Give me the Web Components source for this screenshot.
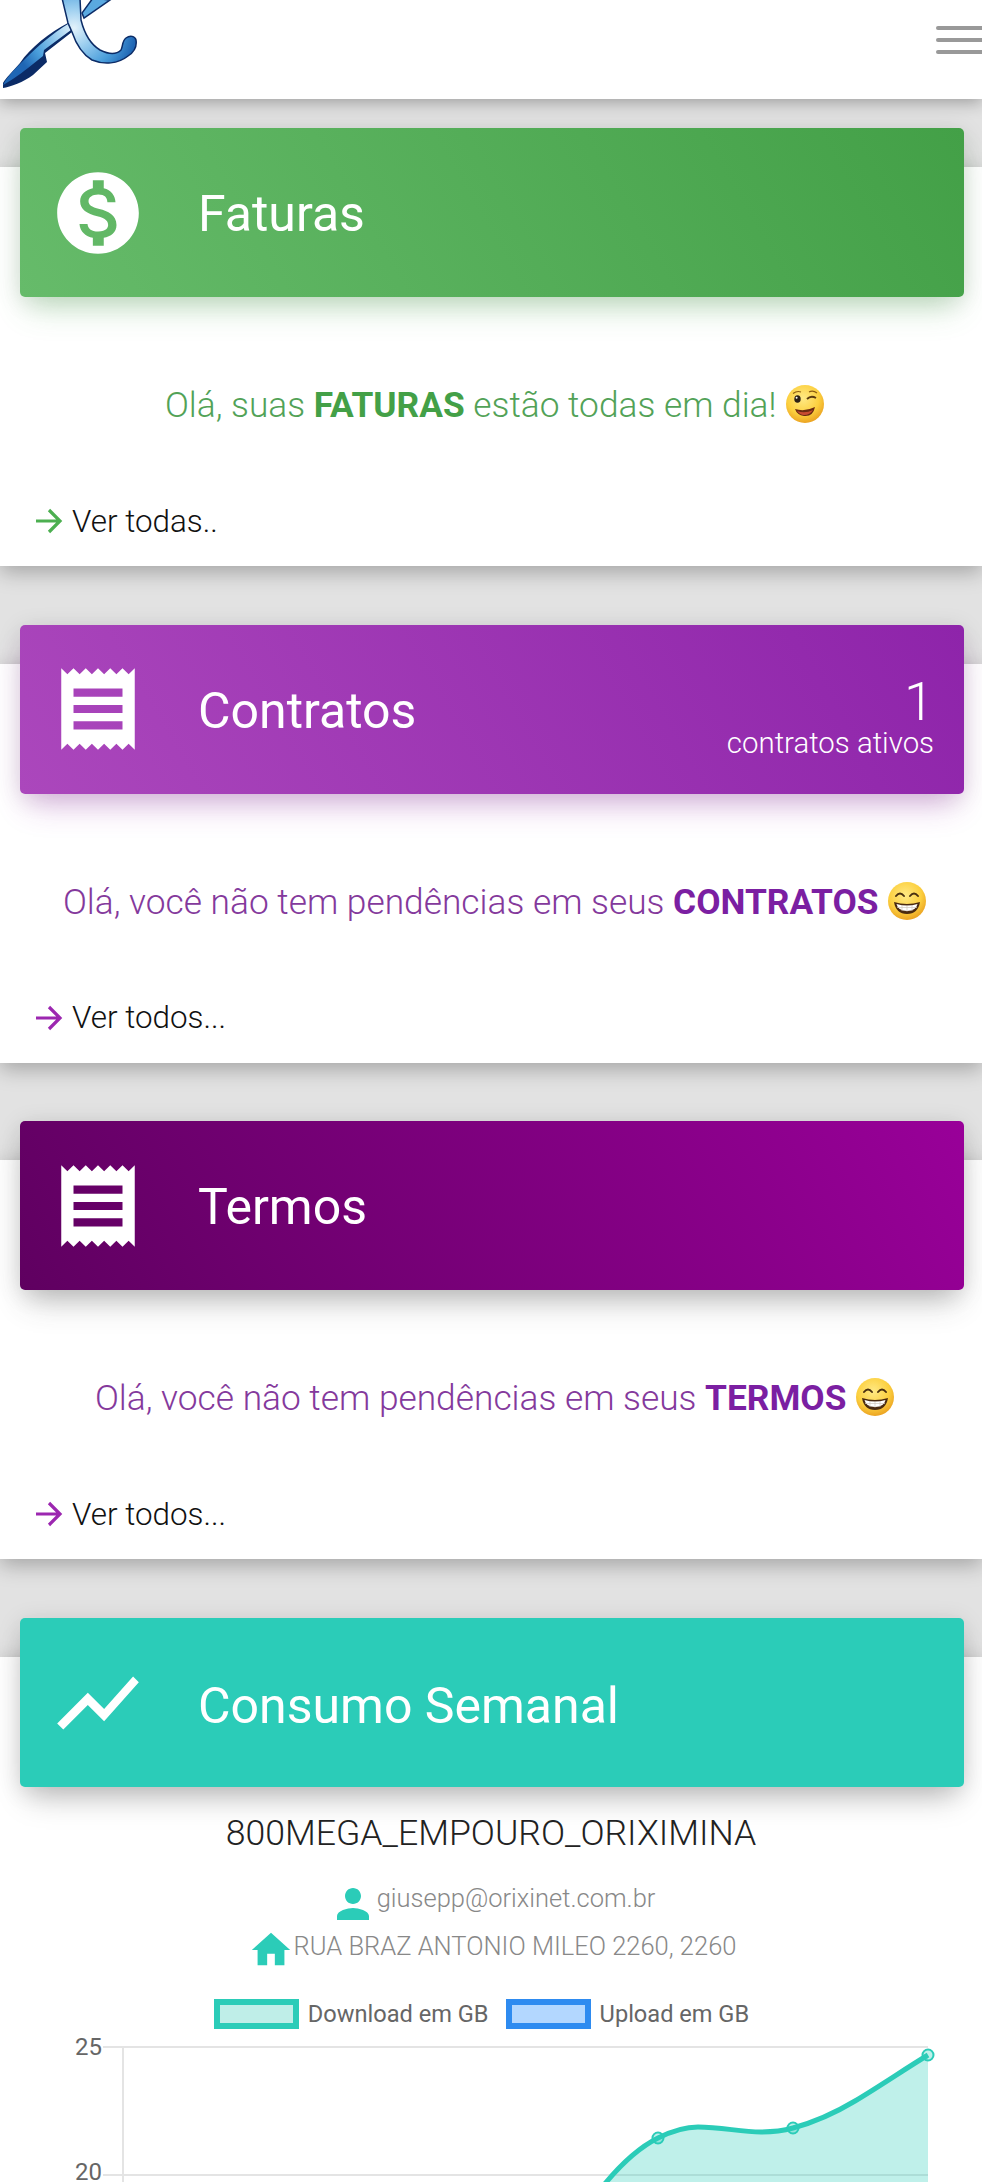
<!DOCTYPE html>
<html lang="pt-BR">
<head>
<meta charset="utf-8">
<title>Painel</title>
<style>
html,body{margin:0;height:2182px;overflow:hidden;background:#e2e2e2;font-family:Roboto,"Liberation Sans",sans-serif}
</style>
</head>
<body>
<app-bar></app-bar>
<main-stack>
  <info-card heading="Faturas" from="#66bb6a" to="#43a047" glow="76,175,80" icon="money" accent="#43a047" soft="#52a257" arrow="#4caf50" link="Ver todas..">Olá, suas <b>FATURAS</b> estão todas em dia! <emoji-face kind="wink"></emoji-face></info-card>
  <info-card heading="Contratos" from="#ab47bc" to="#8e24aa" glow="156,39,176" icon="receipt" accent="#7b1fa2" soft="#84399c" arrow="#9c27b0" link="Ver todos..." count="1" count-label="contratos ativos">Olá, você não tem pendências em seus <b>CONTRATOS</b> <emoji-face kind="grin"></emoji-face></info-card>
  <info-card heading="Termos" from="#5f0060" to="#990099" glow="60,60,60" icon="receipt" accent="#7b1fa2" soft="#84399c" arrow="#9c27b0" link="Ver todos...">Olá, você não tem pendências em seus <b>TERMOS</b> <emoji-face kind="grin"></emoji-face></info-card>
  <usage-card heading="Consumo Semanal"></usage-card>
</main-stack>

<script>
const ICONS={
 money:'<path d="M12 2C6.48 2 2 6.48 2 12s4.48 10 10 10 10-4.48 10-10S17.52 2 12 2zm1.41 16.09V20h-2.67v-1.93c-1.71-.36-3.16-1.46-3.27-3.4h1.96c.1 1.05.82 1.87 2.65 1.87 1.96 0 2.4-.98 2.4-1.59 0-.83-.44-1.61-2.67-2.14-2.48-.6-4.18-1.62-4.18-3.67 0-1.72 1.39-2.84 3.11-3.21V4h2.67v1.95c1.86.45 2.79 1.86 2.87 3.39H14.3c-.05-1.11-.64-1.87-2.22-1.87-1.5 0-2.4.68-2.4 1.64 0 .84.65 1.39 2.67 1.91s4.18 1.39 4.18 3.91c-.01 1.83-1.38 2.83-3.12 3.16z"/>',
 receipt:'<path d="M18 17H6v-2h12v2zm0-4H6v-2h12v2zm0-4H6V7h12v2zM3 22l1.5-1.5L6 22l1.5-1.5L9 22l1.5-1.5L12 22l1.5-1.5L15 22l1.5-1.5L18 22l1.5-1.5L21 22V2l-1.5 1.5L18 2l-1.5 1.5L15 2l-1.5 1.5L12 2l-1.5 1.5L9 2 7.5 3.5 6 2 4.5 3.5 3 2v20z"/>',
 chart:'<path d="M3.5 18.49l6-6.01 4 4L22 6.92l-1.41-1.41-7.09 7.97-4-4L2 16.99z"/>'
};
function def(name,html){
  class C extends HTMLElement{
    constructor(){super();this.attachShadow({mode:'open'})}
    connectedCallback(){this.shadowRoot.innerHTML=typeof html==='function'?html(this):html}
  }
  customElements.define(name,C);
}
def('app-bar',`<style>
:host{display:block;position:relative;z-index:5;height:99px;background:#fff;box-shadow:0 3px 16px rgba(0,0,0,.32);overflow:hidden}
.row{display:flex;justify-content:space-between;height:99px}
.logo{display:block;width:150px;height:99px}
.menu{display:flex;flex-direction:column;gap:8px;width:46px;padding-top:26px}
.menu i{display:block;height:4px;background:#999;border-radius:2px 0 0 2px}
</style><div class="row">
<svg class="logo" viewBox="0 0 150 99"><defs>
<radialGradient id="g" gradientUnits="userSpaceOnUse" cx="74" cy="28" r="62"><stop offset="0" stop-color="#e3f2fb"/><stop offset=".3" stop-color="#9fd0f0"/><stop offset=".7" stop-color="#4a9edb"/><stop offset="1" stop-color="#1f66b4"/></radialGradient></defs>
<path d="M3 88C10 87 24 82 33 75L47 62L45 53L72 32L68 23C50 32 30 48 20 63C12 72 6 78 3 83Z" fill="#0b2b66"/>
<path d="M3 85C8 75 18 66 26 58C38 46 52 34 68 24L71 30L44 50L43 56L28 68C18 76 10 81 3 85Z" fill="url(#g)"/>
<path d="M62 -2L68 23L72 32C76 44 82 54 92 60C104 65 118 64 128 56C134 52 137 46 136 40C135 36 130 35 126 38C122 41 123 46 121 50C116 55 108 54 100 50C90 44 84 32 81 20L80 -2Z" fill="url(#g)" stroke="#0b2b66" stroke-width="1.5"/>
<path d="M82 13L84 18L110 0L93 -2Z" fill="#5aa9e0" stroke="#0b2b66" stroke-width="1.5"/>
</svg>
<div class="menu"><i></i><i></i><i></i></div></div>`);
def('main-stack',`<style>:host{display:flex;flex-direction:column;gap:97.7px;padding-top:68px}</style><slot></slot>`);
const headStyle=`
.head{position:relative;z-index:2;display:flex;align-items:center;height:169px;margin:-39px 18px 0 20px;padding:0 30px 0 29px;border-radius:5px;color:#fff;box-sizing:border-box}
.head svg{width:98px;height:98px;fill:#fff;flex:none}
h2{margin:3px 0 0 51px;font-size:50px;font-weight:400;line-height:60px}
`;
def('info-card',e=>{
 const a=n=>e.getAttribute(n)||'';const g=a('glow');
 const count=a('count')?`<div class="cnt"><span class="n">${a('count')}</span><span class="l">${a('count-label')}</span></div>`:'';
 return `<style>
:host{display:block;background:#fff;box-shadow:0 6px 20px rgba(0,0,0,.28);height:399px;color:${a('soft')}}
${headStyle}
.head{background:linear-gradient(60deg,${a('from')},${a('to')});box-shadow:0 18px 30px -8px rgba(${g},.3),0 4px 24px 0 rgba(0,0,0,.12)}
.cnt{margin-left:auto;display:flex;flex-direction:column;align-items:flex-end;font-weight:300;padding-top:18px}
.n{font-size:54px;line-height:50px}
.l{font-size:29.4px;line-height:32px}
.msg{display:flex;align-items:center;justify-content:center;height:54px;margin-top:81px;padding-left:8px;font-size:35.3px;font-weight:300;white-space:nowrap}
.msg-in{display:block}
::slotted(b){font-weight:700;color:${a('accent')}}
.go{display:flex;align-items:center;height:54px;margin-top:62px;padding-left:34px;font-size:31.4px;font-weight:300;color:#111}
.go svg{width:29px;height:28px;margin-right:9px;flex:none}
</style>
<div class="head"><svg viewBox="0 0 24 24">${ICONS[a('icon')]}</svg><h2>${a('heading')}</h2>${count}</div>
<div class="msg"><span class="msg-in"><slot></slot></span></div>
<div class="go"><svg viewBox="0 0 29 28" fill="none" stroke="${a('arrow')}" stroke-width="3.2"><path d="M2 14H26M15 3L26 14L15 25"/></svg>${a('link')}</div>`});
def('emoji-face',e=>{
 const w=e.getAttribute('kind')==='wink';
 const eyes=w?'<ellipse cx="12.5" cy="15" rx="3.2" ry="3.8" fill="#2b2016"/><circle cx="11.6" cy="13.7" r="1" fill="#fff"/><path d="M8 9.5Q12 6.5 16 8" stroke="#8a5a10" stroke-width="1.2" fill="none"/><path d="M22 15Q26 11 31 14" stroke="#5a3a10" stroke-width="1.8" fill="none"/><path d="M24 8Q28 6 32 9" stroke="#8a5a10" stroke-width="1.2" fill="none"/><path d="M10 25Q20 28 30 23Q28 33 19 32Q12 31 10 25Z" fill="#6a2a12"/><path d="M12 27Q20 30 28 26Q25 31 19 31Q15 31 12 27Z" fill="#e0523a" opacity=".8"/>'
 :'<path d="M9 15Q13 10 17 15M23 15Q27 10 31 15" stroke="#4a3010" stroke-width="2" fill="none" stroke-linecap="round"/><path d="M7 21Q20 25 33 21Q31 33 20 33Q9 33 7 21Z" fill="#4a2a10"/><path d="M9.5 23Q20 26 30.500 23Q29 30 20 30Q11 30 9.500 23Z" fill="#fff"/><path d="M10 26.500H30M15 24.500V30M20 25V30.500M25 24.500V30" stroke="#cfc7bd" stroke-width=".7"/>';
 return `<style>:host{display:inline-block;width:40px;height:40px;vertical-align:-7px}svg{display:block;width:40px;height:40px}</style>
<svg viewBox="0 0 40 40"><defs><radialGradient id="f" cx=".45" cy=".35" r=".7"><stop offset="0" stop-color="#ffe985"/><stop offset=".6" stop-color="#fcd03f"/><stop offset="1" stop-color="#e89a1c"/></radialGradient></defs><circle cx="20" cy="20" r="19" fill="url(#f)"/>${eyes}</svg>`});
def('usage-card',e=>`<style>
:host{display:block;background:#fff;box-shadow:0 6px 20px rgba(0,0,0,.28);height:526px;color:#222;overflow:visible}
${headStyle}
.head{background:#2bccb8;box-shadow:0 18px 30px -8px rgba(0,0,0,.22),0 4px 24px 0 rgba(0,0,0,.12)}
h2{margin-top:7px}
.name{height:50px;line-height:50px;margin-top:21px;text-align:center;font-size:35.6px;font-weight:300}
.line{display:flex;justify-content:center;align-items:center;font-size:25.5px;font-weight:300;color:#888;padding-left:2px}
.mail{height:47px;margin-top:16px}
.addr{height:50px}
.line svg{fill:#2bccb8;flex:none}
.mail svg{width:48px;height:48px;transform:translateY(6px)}
.addr svg{width:46px;height:46px;transform:translateY(4px)}
.legend{display:flex;justify-content:center;align-items:center;gap:9px;height:30px;margin-top:28px;font-size:23.6px;color:#666;padding-right:19px}
.sw{width:85px;height:30px;box-sizing:border-box;border:6px solid}
.sw.a{border-color:#2bccb8;background:#bfeee8}
.sw.b{border-color:#2e8bf0;background:#b3d7ff;margin-left:8px}
svg.chart{display:block;width:982px;height:153px;margin-top:1px}
svg.chart text{font:24px Roboto,"Liberation Sans",sans-serif;fill:#666}
</style>
<div class="head"><svg viewBox="0 0 24 24">${ICONS.chart}</svg><h2>${e.getAttribute('heading')}</h2></div>
<div class="name">800MEGA_EMPOURO_ORIXIMINA</div>
<div class="line mail"><svg viewBox="0 0 24 24"><path d="M12 12c2.21 0 4-1.79 4-4s-1.79-4-4-4-4 1.79-4 4 1.79 4 4 4zm0 2c-2.67 0-8 1.34-8 4v2h16v-2c0-2.66-5.33-4-8-4z"/></svg>giusepp@orixinet.com.br</div>
<div class="line addr"><svg viewBox="0 0 24 24"><path d="M10 20v-6h4v6h5v-8h3L12 3 2 12h3v8z"/></svg>RUA BRAZ ANTONIO MILEO 2260, 2260</div>
<div class="legend"><span class="sw a"></span><span>Download em GB</span><span class="sw b"></span><span>Upload em GB</span></div>
<svg class="chart" viewBox="0 2030 982 153">
<path d="M103 2047H928M103 2175H928M123 2047V2182" stroke="#e4e4e4" stroke-width="2" fill="none"/>
<text x="102" y="2055" text-anchor="end">25</text><text x="102" y="2180" text-anchor="end">20</text>
<path d="M596 2195C615 2170 636 2149 658 2138C672 2131 684 2127 698 2127C722 2127 740 2132 761 2132C772 2132 782 2131 793 2128C815 2122 835 2113 855 2101C880 2086 905 2069 928 2055V2195Z" fill="#2bccb8" fill-opacity=".3"/>
<path d="M596 2195C615 2170 636 2149 658 2138C672 2131 684 2127 698 2127C722 2127 740 2132 761 2132C772 2132 782 2131 793 2128C815 2122 835 2113 855 2101C880 2086 905 2069 928 2055" stroke="#2bccb8" stroke-width="5" fill="none"/>
<g fill="#2bccb8" fill-opacity=".3" stroke="#2bccb8" stroke-width="2"><circle cx="658" cy="2138" r="5.500"/><circle cx="793" cy="2128" r="5.500"/><circle cx="928" cy="2055" r="5.500"/></g>
</svg>`);
</script>
</body>
</html>
